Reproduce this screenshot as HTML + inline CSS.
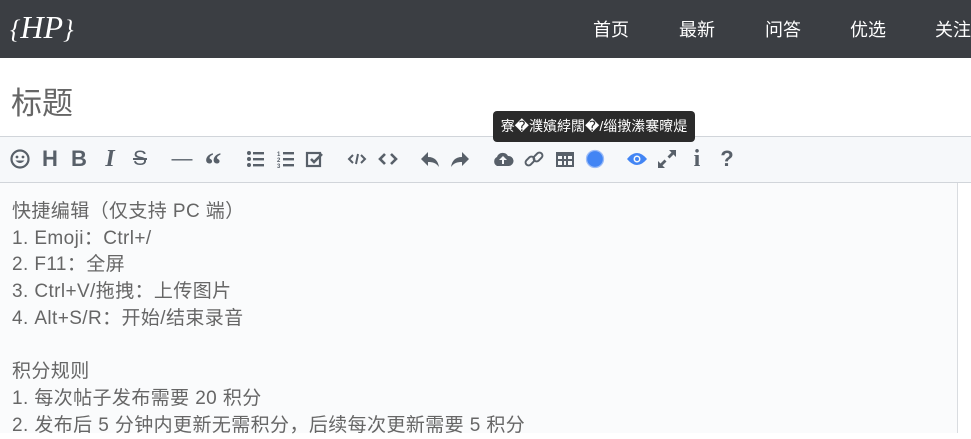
<!DOCTYPE html>
<html><head><meta charset="utf-8"><style>
*{margin:0;padding:0;box-sizing:border-box}
body{width:971px;height:433px;overflow:hidden;background:#fff;font-family:"Liberation Sans","Noto Sans CJK SC",sans-serif;position:relative}
.nav{position:absolute;left:0;top:0;width:971px;height:58px;background:#3b3e43}
.logo{position:absolute;left:10px;top:9px;color:#fff;font-family:"Liberation Serif",serif;font-size:26px;font-style:italic}
.nav a{position:absolute;top:16px;color:#fff;font-size:18px;text-decoration:none}
.title{position:absolute;left:11px;top:84px;font-size:31px;color:#666;line-height:40px}
.tb{position:absolute;left:0;top:136px;width:971px;height:47px;background:#f6f8fa;border-top:1px solid #d1d5da;border-bottom:1px solid #d1d5da}
.ic{position:absolute;top:10px;width:24px;height:24px;display:flex;align-items:center;justify-content:center;color:#586069;font-weight:bold;font-size:21px;transform:translateX(-50%)}
.ed{position:absolute;left:0;top:183px;width:958px;height:250px;background:#fafbfc;border-right:1px solid #d9dce0}
.txt{position:absolute;left:12px;top:199px;font-size:19px;letter-spacing:0.4px;line-height:26.7px;color:#666;white-space:pre}
.tip{position:absolute;left:493px;top:111px;width:202px;height:31px;background:#2b2b2b;border-radius:4px;color:#fff;font-size:14px;line-height:31px;text-align:center;white-space:nowrap;overflow:hidden}
.tip:after{content:"";position:absolute;left:96px;bottom:-6px;border:6px solid transparent;border-bottom:0;border-top-color:#2b2b2b}
</style></head><body>
<div class="nav"><div class="logo">{<span style="font-size:32px">HP</span>}</div>
<a style="left:593px">首页</a><a style="left:679px">最新</a><a style="left:765px">问答</a><a style="left:850px">优选</a><a style="left:935px">关注</a></div>
<div class="title">标题</div>
<div class="tb">
<svg class="ic" style="left:20px" viewBox="0 0 24 24"><circle cx="12" cy="12" r="8.5" fill="none" stroke="#586069" stroke-width="2.2"/><circle cx="9" cy="10" r="1.4" fill="#586069"/><circle cx="15" cy="10" r="1.4" fill="#586069"/><path d="M7.5 13.5q4.5 5 9 0z" fill="#586069"/></svg>
<div class="ic" style="left:50px;font-size:22px">H</div>
<div class="ic" style="left:79px;font-size:22px">B</div>
<div class="ic" style="left:110px;font-style:italic;font-family:'Liberation Serif',serif;font-size:24px">I</div>
<div class="ic" style="left:140px;text-decoration:line-through;font-weight:normal">S</div>
<div class="ic" style="left:182px;font-weight:normal">—</div>
<div class="ic" style="left:213px;font-size:34px;font-family:'Liberation Serif',serif;padding-top:14px">“</div>
<svg class="ic" style="left:256px" viewBox="0 0 24 24" fill="#586069"><circle cx="5" cy="6" r="2"/><circle cx="5" cy="12" r="2"/><circle cx="5" cy="18" r="2"/><rect x="9" y="5" width="11" height="2.4"/><rect x="9" y="11" width="11" height="2.4"/><rect x="9" y="17" width="11" height="2.4"/></svg>
<svg class="ic" style="left:286px" viewBox="0 0 24 24" fill="#586069"><rect x="9" y="5" width="11" height="2.4"/><rect x="9" y="11" width="11" height="2.4"/><rect x="9" y="17" width="11" height="2.4"/><text x="3" y="9" font-size="6" font-family="Liberation Sans">1</text><text x="3" y="15" font-size="6" font-family="Liberation Sans">2</text><text x="3" y="21" font-size="6" font-family="Liberation Sans">3</text></svg>
<svg class="ic" style="left:315px" viewBox="0 0 24 24"><rect x="4" y="6" width="13" height="13" fill="none" stroke="#586069" stroke-width="2.2"/><path d="M8 12l3 3 8-8" fill="none" stroke="#586069" stroke-width="2.6"/></svg>
<svg class="ic" style="left:357px" viewBox="0 0 24 24" fill="none" stroke="#586069" stroke-width="2"><path d="M8 8l-4 4 4 4M16 8l4 4-4 4M13 7l-2 10"/></svg>
<svg class="ic" style="left:388px" viewBox="0 0 24 24" fill="none" stroke="#586069" stroke-width="2.6"><path d="M9 7l-5 5 5 5M15 7l5 5-5 5"/></svg>
<svg class="ic" style="left:430px" viewBox="0 0 24 24" fill="#586069"><path d="M10 5L3 12l7 7v-4c5 0 8 1 11 5-1-6-4-10-11-10z"/></svg>
<svg class="ic" style="left:460px" viewBox="0 0 24 24" fill="#586069"><path d="M14 5l7 7-7 7v-4c-5 0-8 1-11 5 1-6 4-10 11-10z"/></svg>
<svg class="ic" style="left:503px" viewBox="0 0 24 24" fill="#586069"><path d="M6 19a5 5 0 0 1 0-9 6 6 0 0 1 11-1 5 5 0 0 1 1 10z"/><path d="M12 9l-4 4h3v4h2v-4h3z" fill="#f6f8fa"/></svg>
<svg class="ic" style="left:534px" viewBox="0 0 24 24" fill="none" stroke="#586069" stroke-width="2"><rect x="3" y="11" width="10" height="6" rx="3" transform="rotate(-45 8 14)"/><rect x="11" y="7" width="10" height="6" rx="3" transform="rotate(-45 16 10)"/></svg>
<svg class="ic" style="left:565px" viewBox="0 0 24 24" fill="#586069"><path d="M3 5h18v15H3zM5 9v3h4V9zm6 0v3h2V9zm4 0v3h4V9zM5 14v4h4v-4zm6 0v4h2v-4zm4 0v4h4v-4z" fill-rule="evenodd"/></svg>
<svg class="ic" style="left:595px" viewBox="0 0 24 24"><circle cx="12" cy="12" r="8.5" fill="#4285f4" stroke="#9bbcf7" stroke-width="1.3"/></svg>
<svg class="ic" style="left:637px" viewBox="0 0 24 24"><path d="M2 12q10-12 20 0-10 12-20 0z" fill="#4285f4"/><circle cx="12" cy="12" r="3.5" fill="#f6f8fa"/><circle cx="12" cy="12" r="2" fill="#4285f4"/></svg>
<svg class="ic" style="left:667px" viewBox="0 0 24 24" fill="#586069"><path d="M14 3h7v7l-2.5-2.5-4 4-2-2 4-4zM10 21H3v-7l2.5 2.5 4-4 2 2-4 4z"/></svg>
<div class="ic" style="left:697px;font-family:'Liberation Serif',serif;font-size:24px">i</div>
<div class="ic" style="left:727px;font-size:22px">?</div>
</div>
<div class="ed"></div>
<div class="txt">快捷编辑（仅支持 PC 端）
1. Emoji：Ctrl+/
2. F11：全屏
3. Ctrl+V/拖拽：上传图片
4. Alt+S/R：开始/结束录音

积分规则
1. 每次帖子发布需要 20 积分
2. 发布后 5 分钟内更新无需积分，后续每次更新需要 5 积分</div>
<div class="tip">寮�濮嬪綍闊�/缁撴潫褰曢煶</div>
</body></html>
